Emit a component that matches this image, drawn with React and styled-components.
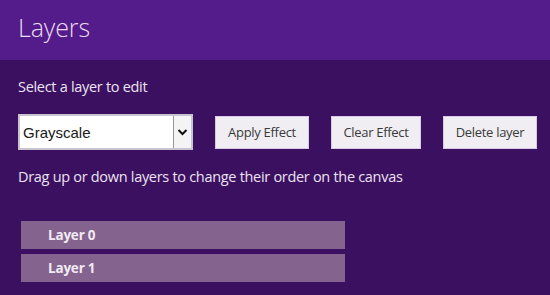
import React from "react";
import styled, { createGlobalStyle } from "styled-components";

const Global = createGlobalStyle`
  html, body {
    margin: 0;
    padding: 0;
    background: #3b1060;
  }
  body {
    font-family: "Open Sans", "Noto Sans", sans-serif;
  }
`;

const Page = styled.div`
  width: 550px;
  height: 295px;
  overflow: hidden;
  background: #3b1060;
  display: flex;
  flex-direction: column;
`;

const Header = styled.header`
  height: 60px;
  background: #541b8a;
  display: flex;
  align-items: center;
  padding: 0 18px;
  box-sizing: border-box;
  flex-shrink: 0;
`;

const Title = styled.h1`
  margin: 0 0 6px;
  font-size: 25px;
  font-weight: 300;
  color: #eadcf3;
  letter-spacing: -0.1px;
`;

const Body = styled.main`
  padding: 16px 18px 0;
  display: flex;
  flex-direction: column;
`;

const Label = styled.p`
  margin: 0;
  font-size: 14.5px;
  line-height: 21px;
  color: #ece3f2;
  letter-spacing: -0.3px;
`;

const Toolbar = styled.div`
  display: flex;
  align-items: center;
  margin-top: 17px;
  gap: 22px;
`;

const SelectBox = styled.div`
  width: 175px;
  flex-shrink: 0;
  height: 36px;
  box-sizing: border-box;
  background: #fff;
  border: 2px solid #c9c3cf;
  display: flex;
  align-items: stretch;
`;

const SelectValue = styled.span`
  flex: 1;
  display: flex;
  align-items: center;
  padding-left: 3px;
  font-family: "Liberation Sans", Arial, sans-serif;
  font-size: 15px;
  color: #1a1a1a;
`;

const ArrowBox = styled.span`
  width: 17px;
  border-left: 1px solid #9a959e;
  display: flex;
  align-items: center;
  justify-content: center;
  background: #f4f4f4;
`;

const Button = styled.button`
  flex-shrink: 0;
  height: 33px;
  padding: 0;
  width: ${(p) => p.$w}px;
  background: #f0eef2;
  border: 1px solid #d8c8e6;
  font-family: "Open Sans", "Noto Sans", sans-serif;
  font-size: 13px;
  letter-spacing: -0.3px;
  color: #3a3a3a;
  cursor: pointer;
`;

const Hint = styled(Label)`
  margin-top: 16px;
`;

const LayerList = styled.ul`
  list-style: none;
  margin: 34px 0 0 3px;
  padding: 0;
  display: flex;
  flex-direction: column;
  gap: 5px;
`;

const LayerItem = styled.li`
  width: 324px;
  height: 28px;
  background: #84648e;
  display: flex;
  align-items: center;
  padding-left: 27px;
  box-sizing: border-box;
  font-size: 13.5px;
  font-weight: 700;
  color: #f1eaf4;
  letter-spacing: -0.2px;
`;

const Chevron = () => (
  <svg width="11" height="8" viewBox="0 0 11 8">
    <path d="M1.5 2 L5.5 6 L9.5 2" fill="none" stroke="#111" strokeWidth="2" />
  </svg>
);

export default function App() {
  return (
    <Page>
      <Global />
      <Header>
        <Title>Layers</Title>
      </Header>
      <Body>
        <Label>Select a layer to edit</Label>
        <Toolbar>
          <SelectBox>
            <SelectValue>Grayscale</SelectValue>
            <ArrowBox>
              <Chevron />
            </ArrowBox>
          </SelectBox>
          <Button $w={94}>Apply Effect</Button>
          <Button $w={90}>Clear Effect</Button>
          <Button $w={94}>Delete layer</Button>
        </Toolbar>
        <Hint>Drag up or down layers to change their order on the canvas</Hint>
        <LayerList>
          <LayerItem>Layer 0</LayerItem>
          <LayerItem>Layer 1</LayerItem>
        </LayerList>
      </Body>
    </Page>
  );
}
